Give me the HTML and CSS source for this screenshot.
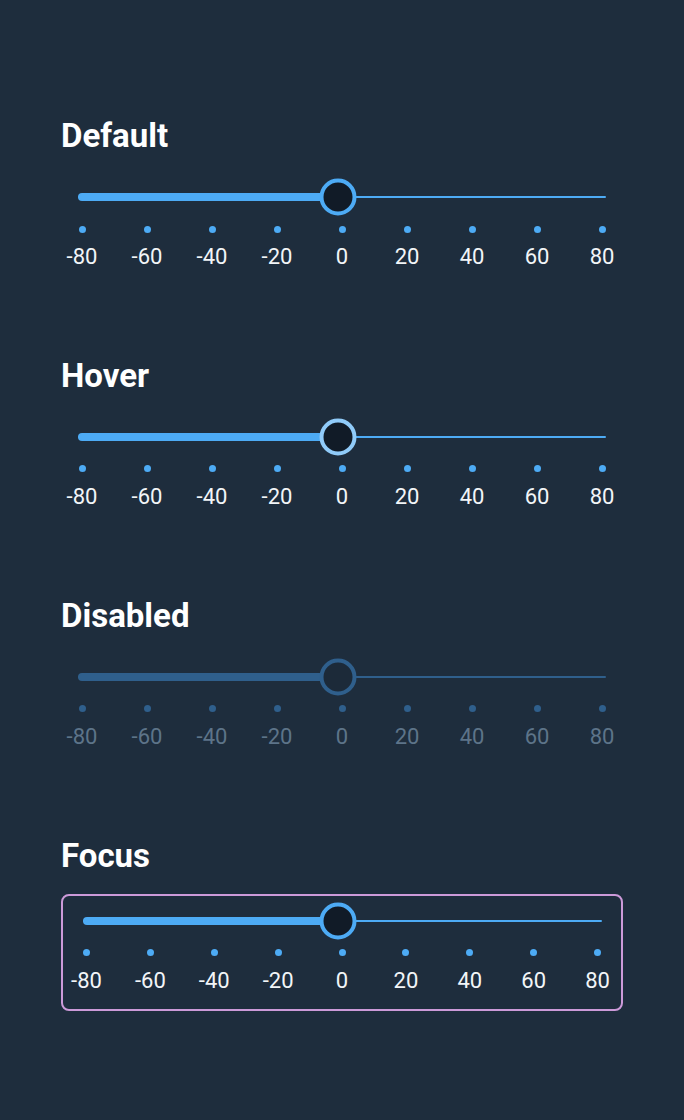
FILE: index.html
```html
<!DOCTYPE html>
<html>
<head>
<meta charset="utf-8">
<link rel="stylesheet" href="styles.css">
</head>
<body>
<main class="page">
  <section class="section">
    <h2 class="title">Default</h2>
    <div class="slider">
      <div class="track-area">
        <div class="rail"></div>
        <div class="fill"></div>
        <div class="thumb"></div>
      </div>
      <div class="marks">
        <div class="mark"><span class="dot"></span><span class="label">-80</span></div>
        <div class="mark"><span class="dot"></span><span class="label">-60</span></div>
        <div class="mark"><span class="dot"></span><span class="label">-40</span></div>
        <div class="mark"><span class="dot"></span><span class="label">-20</span></div>
        <div class="mark"><span class="dot"></span><span class="label">0</span></div>
        <div class="mark"><span class="dot"></span><span class="label">20</span></div>
        <div class="mark"><span class="dot"></span><span class="label">40</span></div>
        <div class="mark"><span class="dot"></span><span class="label">60</span></div>
        <div class="mark"><span class="dot"></span><span class="label">80</span></div>
      </div>
    </div>
  </section>
  <section class="section">
    <h2 class="title">Hover</h2>
    <div class="slider hover">
      <div class="track-area">
        <div class="rail"></div>
        <div class="fill"></div>
        <div class="thumb"></div>
      </div>
      <div class="marks">
        <div class="mark"><span class="dot"></span><span class="label">-80</span></div>
        <div class="mark"><span class="dot"></span><span class="label">-60</span></div>
        <div class="mark"><span class="dot"></span><span class="label">-40</span></div>
        <div class="mark"><span class="dot"></span><span class="label">-20</span></div>
        <div class="mark"><span class="dot"></span><span class="label">0</span></div>
        <div class="mark"><span class="dot"></span><span class="label">20</span></div>
        <div class="mark"><span class="dot"></span><span class="label">40</span></div>
        <div class="mark"><span class="dot"></span><span class="label">60</span></div>
        <div class="mark"><span class="dot"></span><span class="label">80</span></div>
      </div>
    </div>
  </section>
  <section class="section">
    <h2 class="title">Disabled</h2>
    <div class="slider disabled">
      <div class="track-area">
        <div class="rail"></div>
        <div class="fill"></div>
        <div class="thumb"></div>
      </div>
      <div class="marks">
        <div class="mark"><span class="dot"></span><span class="label">-80</span></div>
        <div class="mark"><span class="dot"></span><span class="label">-60</span></div>
        <div class="mark"><span class="dot"></span><span class="label">-40</span></div>
        <div class="mark"><span class="dot"></span><span class="label">-20</span></div>
        <div class="mark"><span class="dot"></span><span class="label">0</span></div>
        <div class="mark"><span class="dot"></span><span class="label">20</span></div>
        <div class="mark"><span class="dot"></span><span class="label">40</span></div>
        <div class="mark"><span class="dot"></span><span class="label">60</span></div>
        <div class="mark"><span class="dot"></span><span class="label">80</span></div>
      </div>
    </div>
  </section>
  <section class="section">
    <h2 class="title">Focus</h2>
    <div class="slider focus">
      <div class="track-area">
        <div class="rail"></div>
        <div class="fill"></div>
        <div class="thumb"></div>
      </div>
      <div class="marks">
        <div class="mark"><span class="dot"></span><span class="label">-80</span></div>
        <div class="mark"><span class="dot"></span><span class="label">-60</span></div>
        <div class="mark"><span class="dot"></span><span class="label">-40</span></div>
        <div class="mark"><span class="dot"></span><span class="label">-20</span></div>
        <div class="mark"><span class="dot"></span><span class="label">0</span></div>
        <div class="mark"><span class="dot"></span><span class="label">20</span></div>
        <div class="mark"><span class="dot"></span><span class="label">40</span></div>
        <div class="mark"><span class="dot"></span><span class="label">60</span></div>
        <div class="mark"><span class="dot"></span><span class="label">80</span></div>
      </div>
    </div>
  </section>
</main>
</body>
</html>
```

FILE: styles.css
```css
html, body {
  margin: 0;
  padding: 0;
  background: #1e2d3d;
}

body {
  font-family: Roboto, "Liberation Sans", sans-serif;
  color: #f2f5f8;
  width: 684px;
  height: 1120px;
  overflow: hidden;
}

.page {
  display: flex;
  flex-direction: column;
  gap: 75.2px;
  padding: 118px 61px 0;
}

.section {
  display: flex;
  flex-direction: column;
}

.title {
  margin: 0 0 20px;
  font-size: 33px;
  line-height: 36px;
  font-weight: 700;
  color: #ffffff;
}

.slider {
  border: 2px solid transparent;
  border-radius: 8px;
  padding: 1px 15px 11.7px;
  --accent: #4dabf5;
  --ring: #4dabf5;
  --knob: #111b27;
  --text: #f2f5f8;
}

.slider.hover {
  --ring: #90cbf9;
}

.slider.disabled {
  --accent: #2f5f8c;
  --ring: #2f5f8c;
  --knob: #1c2a39;
  --text: #5d7489;
}

.slider.focus {
  border-color: #cc9ad9;
  padding: 5px 19.5px 16.2px;
}

.track-area {
  position: relative;
  height: 40px;
}

.rail {
  position: absolute;
  left: 0;
  right: 0;
  top: 19px;
  height: 2px;
  background: var(--accent);
  border-radius: 1px;
}

.fill {
  position: absolute;
  left: 0;
  top: 16px;
  width: calc(50% - 4px);
  height: 8px;
  border-radius: 4px;
  background: var(--accent);
}

.thumb {
  position: absolute;
  left: calc(50% - 4px);
  top: 20px;
  width: 37px;
  height: 37px;
  box-sizing: border-box;
  border: 4px solid var(--ring);
  border-radius: 50%;
  background: var(--knob);
  transform: translate(-50%, -50%);
}

.marks {
  display: flex;
  justify-content: space-between;
  padding: 0 4px;
  margin-top: 8.5px;
}

.mark {
  width: 0;
  display: flex;
  flex-direction: column;
  align-items: center;
}

.dot {
  display: block;
  width: 7px;
  height: 7px;
  border-radius: 50%;
  background: var(--accent);
  flex: none;
}

.label {
  display: block;
  margin-top: 12.5px;
  font-size: 22px;
  line-height: 24px;
  color: var(--text);
  white-space: nowrap;
}
```
